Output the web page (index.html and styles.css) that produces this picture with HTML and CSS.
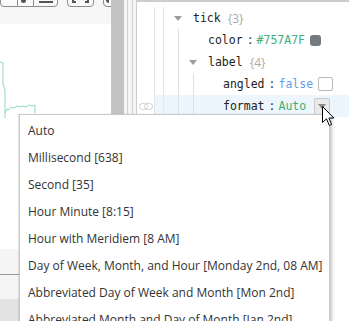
FILE: index.html
```html
<!DOCTYPE html>
<html lang="en">
<head>
    <meta charset="UTF-8">
    <title>Tick format picker</title>
    <link rel="stylesheet" href="styles.css">
</head>
<body>
    <div class="app">
        <div class="left">
            <div class="toolbar">
                <div class="btn-group">
                    <span class="seg"></span>
                    <span class="seg"><i class="ico pin"></i></span>
                    <span class="seg wide"><i class="ico bar"></i></span>
                </div>
                <div class="btn-group">
                    <span class="seg fs"><i class="corner l"></i><i class="corner r"></i></span>
                </div>
                <div class="btn-group">
                    <span class="seg"><i class="ico hook"></i></span>
                </div>
            </div>
            <div class="chart">
                <svg width="111" height="225" viewBox="0 24 111 225">
                    <path d="M0 62 L3 63 L3 84 L5 90 L5 118 M5 113 L7 109 L9 110 L11 107 L14 108 L17 106 L20 107 L23 106 L26 107 L29 105 L32 106 L35 105 L35 113" fill="none" stroke="#8fd9bb" stroke-width="1"/>
                </svg>
            </div>
            <div class="band"></div>
            <div class="band lined"></div>
            <div class="shelf"></div>
        </div>
        <div class="splitter"></div>
        <div class="gap"></div>
        <div class="gap"></div>
        <div class="gap last"></div>
        <div class="pane">
            <div class="row">
                <div class="gutter"></div>
                <div class="cell d0" style="padding-left: 19px">
                    <span class="twist"><i class="arrow"></i></span>
                    <span class="key">tick</span><span class="count">{3}</span>
                </div>
            </div>
            <div class="row">
                <div class="gutter"></div>
                <div class="cell d1" style="padding-left: 34px">
                    <span class="twist"></span>
                    <span class="key">color</span><span class="colon">:</span><span class="str">#757A7F</span>
                    <span class="swatch"></span>
                </div>
            </div>
            <div class="row">
                <div class="gutter"></div>
                <div class="cell d1" style="padding-left: 34px">
                    <span class="twist"><i class="arrow"></i></span>
                    <span class="key">label</span><span class="count">{4}</span>
                </div>
            </div>
            <div class="row">
                <div class="gutter"></div>
                <div class="cell d2" style="padding-left: 49px">
                    <span class="twist"></span>
                    <span class="key">angled</span><span class="colon">:</span><span class="bool">false</span>
                    <span class="check"></span>
                </div>
            </div>
            <div class="row">
                <div class="gutter">
                    <svg width="14" height="7" viewBox="0 0 14 7">
                        <rect x="0.5" y="0.5" width="8" height="6" rx="3" fill="none" stroke="#cfcfcf"/>
                        <rect x="5.5" y="0.5" width="8" height="6" rx="3" fill="none" stroke="#cfcfcf"/>
                    </svg>
                </div>
                <div class="cell d2 sel" style="padding-left: 49px">
                    <span class="twist"></span>
                    <span class="key">format</span><span class="colon">:</span><span class="str">Auto</span>
                    <span class="drop"><i class="arrow"></i></span>
                </div>
            </div>
            <div class="row">
                <div class="gutter"></div>
                <div class="cell d2"></div>
            </div>
        </div>
    </div>

    <ul class="menu">
        <li>Auto</li>
        <li>Millisecond [638]</li>
        <li>Second [35]</li>
        <li>Hour Minute [8:15]</li>
        <li>Hour with Meridiem [8 AM]</li>
        <li>Day of Week, Month, and Hour [Monday 2nd, 08 AM]</li>
        <li>Abbreviated Day of Week and Month [Mon 2nd]</li>
        <li>Abbreviated Month and Day of Month [Jan 2nd]</li>
    </ul>

    <svg class="cursor" width="13" height="21" viewBox="0 0 13 21">
        <path d="M0.5 0.5 L0.5 16.5 L4.5 12.8 L7.3 19.5 L9.6 18.5 L6.9 12 L11.8 12 Z" fill="#fff" stroke="#000" stroke-width="1"/>
    </svg>
</body>
</html>
```

FILE: styles.css
```css
* {
    margin: 0;
    padding: 0;
    box-sizing: border-box;
}

body {
    width: 349px;
    height: 321px;
    overflow: hidden;
    background: #fff;
    position: relative;
    font-family: 'Open Sans', sans-serif;
}

.app {
    display: flex;
    height: 321px;
}

/* left: chart view */
.left {
    width: 111px;
    display: flex;
    flex-direction: column;
    overflow: hidden;
}

.toolbar {
    height: 24px;
    background: #f6f6f6;
    display: flex;
    gap: 9px;
    align-items: flex-start;
}

.btn-group {
    display: flex;
    height: 22px;
    margin-top: -15px;
    border: 1px solid #8c8c8c;
    border-radius: 4px;
    background: #fafafa;
    flex-shrink: 0;
}

.seg {
    width: 16px;
    position: relative;
    border-left: 1px solid #8c8c8c;
}

.seg:first-child {
    border-left: none;
}

.seg.wide {
    width: 24px;
}

.seg.fs {
    width: 25px;
}

.ico {
    position: absolute;
    bottom: 3px;
    background: #555;
}

.ico.pin {
    left: 3px;
    width: 5px;
    height: 3px;
    border-radius: 0 0 3px 3px;
}

.ico.bar {
    left: 5px;
    width: 14px;
    height: 2px;
}

.ico.hook {
    left: 2px;
    width: 3px;
    height: 4px;
    border-radius: 0 0 0 3px;
}

.corner {
    position: absolute;
    bottom: 3px;
    width: 4px;
    height: 4px;
    border-bottom: 2px solid #555;
}

.corner.l {
    left: 4px;
    border-left: 2px solid #555;
}

.corner.r {
    right: 4px;
    border-right: 2px solid #555;
}

.chart {
    height: 225px;
}

.chart svg {
    display: block;
}

.band {
    height: 25px;
    background: #f5f5f5;
}

.band.lined {
    border-top: 1px solid #9a9a9a;
}

.shelf {
    flex: 1;
    background: #e3e3e3;
}

.splitter {
    width: 13px;
    background: #c3c3c3;
}

.gap {
    width: 4px;
    background: #f5f5f5;
    border-right: 1px solid #d2d2d2;
}

.gap + .gap {
    width: 5px;
}

.gap.last {
    width: 3px;
    border-right: none;
}

/* right: property tree */
.pane {
    flex: 1;
    border-left: 1px solid #cdcdcd;
    border-top: 2px solid #cdcdcd;
    padding-top: 5px;
    display: flex;
    flex-direction: column;
    font-family: 'DejaVu Sans Mono', monospace;
    font-size: 11.5px;
}

.row {
    display: flex;
    height: 22px;
}

.row:last-child {
    flex: 1;
}

.gutter {
    width: 18px;
    border-right: 1px solid #e4e4e4;
    display: flex;
    align-items: center;
    justify-content: center;
}

.cell {
    flex: 1;
    display: flex;
    align-items: center;
    white-space: nowrap;
    background-repeat: no-repeat;
}

.d0 {
    background-image: linear-gradient(#e6e6e6, #e6e6e6);
    background-size: 1px 100%;
    background-position: 8px 0;
}

.d1 {
    background-image: linear-gradient(#e6e6e6, #e6e6e6), linear-gradient(#e0e0e0, #e0e0e0);
    background-size: 1px 100%;
    background-position: 8px 0, 23px 0;
}

.d2 {
    background-image: linear-gradient(#e6e6e6, #e6e6e6), linear-gradient(#e0e0e0, #e0e0e0), linear-gradient(#e0e0e0, #e0e0e0);
    background-size: 1px 100%;
    background-position: 8px 0, 23px 0, 38px 0;
}

.cell.sel {
    background-color: #eef6fd;
}

.twist {
    width: 19px;
    flex-shrink: 0;
    display: flex;
    align-items: center;
}

.arrow {
    display: block;
    width: 0;
    height: 0;
    border-left: 4px solid transparent;
    border-right: 4px solid transparent;
    border-top: 5px solid #9d9d9d;
}

.key {
    color: #222;
}

.count {
    font-family: 'Open Sans', sans-serif;
    font-size: 12px;
    color: #aaa;
    margin-left: 7px;
}

.colon {
    color: #333;
    margin: 0 3px 0 4px;
}

.str {
    color: #44ad78;
}

.bool {
    color: #5f9ee8;
}

.swatch {
    width: 11px;
    height: 11px;
    margin-left: 5px;
    border-radius: 3px;
    background: #757a7f;
}

.check {
    width: 15px;
    height: 14px;
    margin-left: 5px;
    border: 1px solid #b9b9b9;
    border-radius: 2px;
    background: #fff;
}

.drop {
    width: 16px;
    height: 17px;
    margin-left: 8px;
    border: 1px solid #cacaca;
    border-radius: 2px;
    background: #e9e9e9;
    display: flex;
    align-items: center;
    justify-content: center;
}

.drop .arrow {
    border-top-color: #8a8a8a;
}

/* dropdown list */
.menu {
    position: absolute;
    left: 19px;
    top: 114px;
    width: 311px;
    height: 230px;
    list-style: none;
    background: #fff;
    border: 1px solid #c9c9c9;
    box-shadow: 2px 2px 3px rgba(0, 0, 0, 0.22), -1px 0 1px rgba(0, 0, 0, 0.08);
    padding-top: 2px;
    font-size: 12px;
    color: #333;
}

.menu li {
    height: 27px;
    line-height: 27px;
    padding-left: 8px;
    white-space: nowrap;
}

.cursor {
    position: absolute;
    left: 322px;
    top: 106px;
}
```
